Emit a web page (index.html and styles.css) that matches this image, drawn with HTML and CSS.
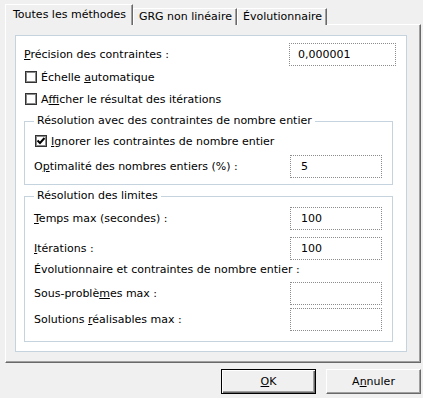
FILE: index.html
```html
<!DOCTYPE html>
<html>
	<head>
		<meta charset="utf-8">
		<title>Options</title>
		<link rel="stylesheet" href="styles.css">
	</head>
	<body>
		<div class="dialog">
			<div class="tabs">
				<div class="tab on">Toutes les méthodes</div>
				<div class="tab">GRG non linéaire</div>
				<div class="tab">Évolutionnaire</div>
			</div>
			<div class="page">
				<div class="panel">
					<div class="row">
						<span><u>P</u>récision des contraintes :</span>
						<div class="field wide">0,000001</div>
					</div>
					<div class="check"><span class="box"></span><span>Échelle <u>a</u>utomatique</span></div>
					<div class="check"><span class="box"></span><span>A<u>f</u>ficher le résultat des itérations</span></div>

					<fieldset class="group g1">
						<legend>Résolution avec des contraintes de nombre entier</legend>
						<div class="check"><span class="box checked"><svg width="10" height="10" viewBox="0 0 10 10"><path d="M1.5 4.5 L4 7 L8.5 2" fill="none" stroke="#000" stroke-width="2"/></svg></span><span><u>I</u>gnorer les contraintes de nombre entier</span></div>
						<div class="row r-opt">
							<span>O<u>p</u>timalité des nombres entiers (%) :</span>
							<div class="field">5</div>
						</div>
					</fieldset>

					<fieldset class="group g2">
						<legend>Résolution des limites</legend>
						<div class="row">
							<span><u>T</u>emps max (secondes) :</span>
							<div class="field">100</div>
						</div>
						<div class="row r-it">
							<span><u>I</u>térations :</span>
							<div class="field">100</div>
						</div>
						<div class="note">Évolutionnaire et contraintes de nombre entier :</div>
						<div class="row r-sub">
							<span>Sous-problè<u>m</u>es max :</span>
							<div class="field"></div>
						</div>
						<div class="row r-sol">
							<span>Solutions <u>r</u>éalisables max :</span>
							<div class="field"></div>
						</div>
					</fieldset>
				</div>
			</div>
			<div class="footer">
				<button type="button" class="btn default"><u>O</u>K</button>
				<button type="button" class="btn">A<u>n</u>nuler</button>
			</div>
		</div>
	</body>
</html>
```

FILE: styles.css
```css
*{
	box-sizing: border-box;
}
body{
	margin: 0;
	width: 423px;
	height: 398px;
	overflow: hidden;
	background-color: #f0f0f0;
	font-family: "DejaVu Sans", sans-serif;
	font-size: 11px;
	color: #000;
}
.dialog{
	padding: 4px 2px 0 5px;
}

/* onglets */
.tabs{
	display: flex;
	align-items: flex-end;
	height: 21px;
	margin-bottom: -1px;
	position: relative;
}
.tab{
	height: 17px;
	line-height: 16px;
	padding: 0 4px 0 5px;
	background-color: #f0f0f0;
	border-top: 1px solid #fff;
	border-left: 1px solid #fff;
	border-right: 1px solid #696969;
	box-shadow: inset -1px 0 #a0a0a0;
}
.tab.on{
	height: 21px;
	line-height: 19px;
	padding: 0 6px 0 7px;
	position: relative;
	z-index: 1;
}

.page{
	height: 339px;
	padding: 10px 13px 10px 9px;
	border-top: 1px solid #fff;
	border-left: 1px solid #fff;
	border-right: 1px solid #696969;
	border-bottom: 1px solid #696969;
	box-shadow: inset -1px -1px #a0a0a0;
}
.panel{
	height: 100%;
	background-color: #fff;
	border: 1px solid #c5d3df;
	padding: 7px 10px 0 8px;
}

.row{
	display: flex;
	align-items: center;
	justify-content: space-between;
}
.field{
	width: 92px;
	height: 23px;
	line-height: 21px;
	padding-left: 10px;
	border: 1px dotted #8c8c8c;
	background-color: #fff;
}
.field.wide{
	width: 107px;
	padding-left: 8px;
}

.check{
	display: flex;
	align-items: center;
	height: 22px;
}
.box{
	width: 12px;
	height: 12px;
	margin: 0 4px 0 1px;
	border: 1px solid #333;
	box-shadow: inset 0 0 0 1px #8a8a8a;
	display: flex;
	align-items: center;
	justify-content: center;
}
.box svg{
	display: block;
}

/* cadres */
.group{
	margin: 4px 3px 0 0;
	border: 1px solid #c5d3df;
	min-width: 0;
}
.group legend{
	padding: 0 3px;
	line-height: 14px;
}
.g1{
	padding: 2px 10px 6px 9px;
}
.g1 .r-opt{
	margin-top: 3px;
}
.g2{
	padding: 4px 10px 10px 9px;
}
.g2 .r-it{
	margin-top: 7px;
}
.note{
	height: 20px;
	line-height: 20px;
}
.g2 .r-sub{
	margin-top: 2px;
}
.g2 .r-sol{
	margin-top: 3px;
}

/* boutons */
.footer{
	display: flex;
	justify-content: flex-end;
	gap: 10px;
	padding-top: 6px;
}
.btn{
	width: 95px;
	height: 25px;
	padding: 0;
	font-family: inherit;
	font-size: 11px;
	color: #000;
	background-color: #f0f0f0;
	border: 1px solid;
	border-color: #fff #696969 #696969 #fff;
	box-shadow: inset -1px -1px #a0a0a0;
}
.btn.default{
	border-color: #000;
	box-shadow: inset 1px 1px #fff, inset -1px -1px #696969, inset -2px -2px #a0a0a0;
}
```
